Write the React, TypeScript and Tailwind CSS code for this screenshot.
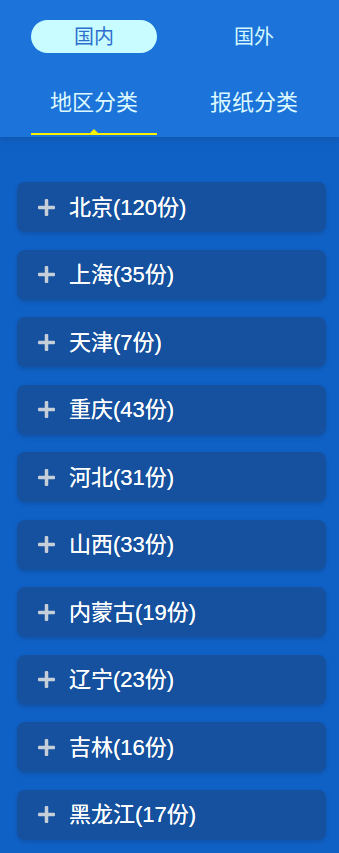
const regions = [
  { name: '北京', count: 120 },
  { name: '上海', count: 35 },
  { name: '天津', count: 7 },
  { name: '重庆', count: 43 },
  { name: '河北', count: 31 },
  { name: '山西', count: 33 },
  { name: '内蒙古', count: 19 },
  { name: '辽宁', count: 23 },
  { name: '吉林', count: 16 },
  { name: '黑龙江', count: 17 },
];

const font = { fontFamily: '"Liberation Sans", "Noto Sans CJK SC", sans-serif' };

function PlusIcon() {
  return (
    <svg width="17" height="17" viewBox="0 0 17 17" className="shrink-0">
      <rect x="6.75" y="0" width="3.5" height="17" rx="1" fill="#c6ced9" />
      <rect x="0" y="6.75" width="17" height="3.5" rx="1" fill="#c6ced9" />
    </svg>
  );
}

export default function App() {
  return (
    <div className="h-[853px] w-[339px] overflow-hidden bg-[#1061c6]" style={font}>
      <header className="relative h-[137px] bg-[#1c73d9] shadow-[0_3px_6px_rgba(0,0,0,0.12)]">
        <div className="flex gap-[34px] pl-[31px] pt-[20px]">
          <div className="flex h-[33px] w-[126px] items-center justify-center rounded-full bg-[#c9fcfe] text-[20px] text-[#2c6fcf]">
            国内
          </div>
          <div className="flex h-[33px] w-[126px] items-center justify-center text-[20px] text-[#d3f6ff]">
            国外
          </div>
        </div>
        <div className="mt-[34px] flex gap-[34px] pl-[31px]">
          <div className="relative flex h-[48px] w-[126px] flex-col items-center">
            <span className="text-[22px] leading-[32px] text-[#dcf9ff]">地区分类</span>
            <div className="absolute bottom-0 left-0 h-[2px] w-full bg-[#fff200]" />
            <div className="absolute bottom-[2px] left-[59px] h-0 w-0 border-x-[4px] border-b-[4px] border-x-transparent border-b-[#fff200]" />
          </div>
          <div className="flex h-[48px] w-[126px] flex-col items-center">
            <span className="text-[22px] leading-[32px] text-[#dcf9ff]">报纸分类</span>
          </div>
        </div>
      </header>
      <main className="ml-[17px] mr-[13px] flex flex-col gap-[17.5px] pt-[45px]">
        {regions.map((r) => (
          <div
            key={r.name}
            className="flex h-[50px] items-center gap-[14px] rounded-[8px] bg-[#15519e] pl-[21px] shadow-[0_2px_5px_rgba(0,0,0,0.15)]"
          >
            <PlusIcon />
            <span className="text-[22px] text-white [text-shadow:0_0_0.4px_#fff]">
              {r.name}({r.count}份)
            </span>
          </div>
        ))}
      </main>
    </div>
  );
}
